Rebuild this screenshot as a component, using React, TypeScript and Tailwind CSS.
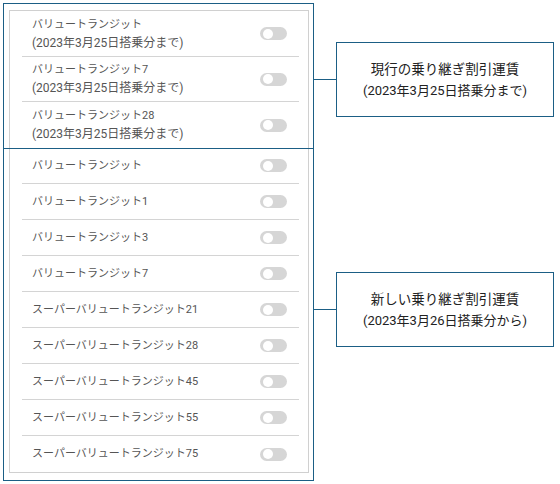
const font = { fontFamily: "Roboto, 'Noto Sans CJK JP', sans-serif" };

const oldFares = [
  "バリュートランジット",
  "バリュートランジット7",
  "バリュートランジット28",
];

const newFares = [
  "バリュートランジット",
  "バリュートランジット1",
  "バリュートランジット3",
  "バリュートランジット7",
  "スーパーバリュートランジット21",
  "スーパーバリュートランジット28",
  "スーパーバリュートランジット45",
  "スーパーバリュートランジット55",
  "スーパーバリュートランジット75",
];

function Toggle() {
  return (
    <span className="flex h-[13px] w-[27px] shrink-0 items-center rounded-full bg-[#d6d6d6] px-[3px]">
      <span className="h-[10px] w-[10px] rounded-full bg-white" />
    </span>
  );
}

function Row({
  label,
  note,
  last,
  className,
}: {
  label: string;
  note?: string;
  last?: boolean;
  className?: string;
}) {
  return (
    <div
      className={`ml-[12px] mr-[9px] flex items-center justify-between pl-[10px] pr-[12px] ${
        last ? "" : "border-b border-[#d4d4d4]"
      } ${className ?? ""}`}
    >
      <div className="leading-[18px] text-[#555]">
        <div className="text-[11px]">{label}</div>
        {note && <div className="text-[12px]">{note}</div>}
      </div>
      <Toggle />
    </div>
  );
}

function Callout({ lines, className }: { lines: string[]; className?: string }) {
  return (
    <div className={`flex items-center ${className ?? ""}`}>
      <div className="h-[1px] w-[22px] bg-[#1b5e85]" />
      <div className="flex h-[75px] w-[218px] flex-col items-center justify-center border border-[#1b5e85] leading-[22px] text-[#222]">
        <div className="text-[13.5px]">{lines[0]}</div>
        <div className="text-[13px]">{lines[1]}</div>
      </div>
    </div>
  );
}

export default function App() {
  return (
    <div className="flex bg-white p-[3px]" style={font}>
      <div className="h-[478px] w-[311px] border border-[#1b5e85] pb-[7px] pl-[5px] pr-[4px] pt-[6px]">
        <div className="h-full border border-[#d0d0d0]">
          <div>
            {oldFares.map((f, i) => (
              <Row
                key={f}
                label={f}
                note="(2023年3月25日搭乗分まで)"
                last={i === oldFares.length - 1}
                className={i === 1 ? "h-[45px]" : "h-[46px]"}
              />
            ))}
          </div>
          <div className="relative">
            <div className="absolute left-[-6px] right-[-5px] top-0 h-[1px] bg-[#1b5e85]" />
            {newFares.map((f, i) => (
              <Row
                key={f}
                label={f}
                last={i === newFares.length - 1}
                className="h-[36px]"
              />
            ))}
          </div>
        </div>
      </div>
      <div className="flex flex-col">
        <Callout
          className="mt-[39px]"
          lines={["現行の乗り継ぎ割引運賃", "(2023年3月25日搭乗分まで)"]}
        />
        <Callout
          className="mt-[155px]"
          lines={["新しい乗り継ぎ割引運賃", "(2023年3月26日搭乗分から)"]}
        />
      </div>
    </div>
  );
}
